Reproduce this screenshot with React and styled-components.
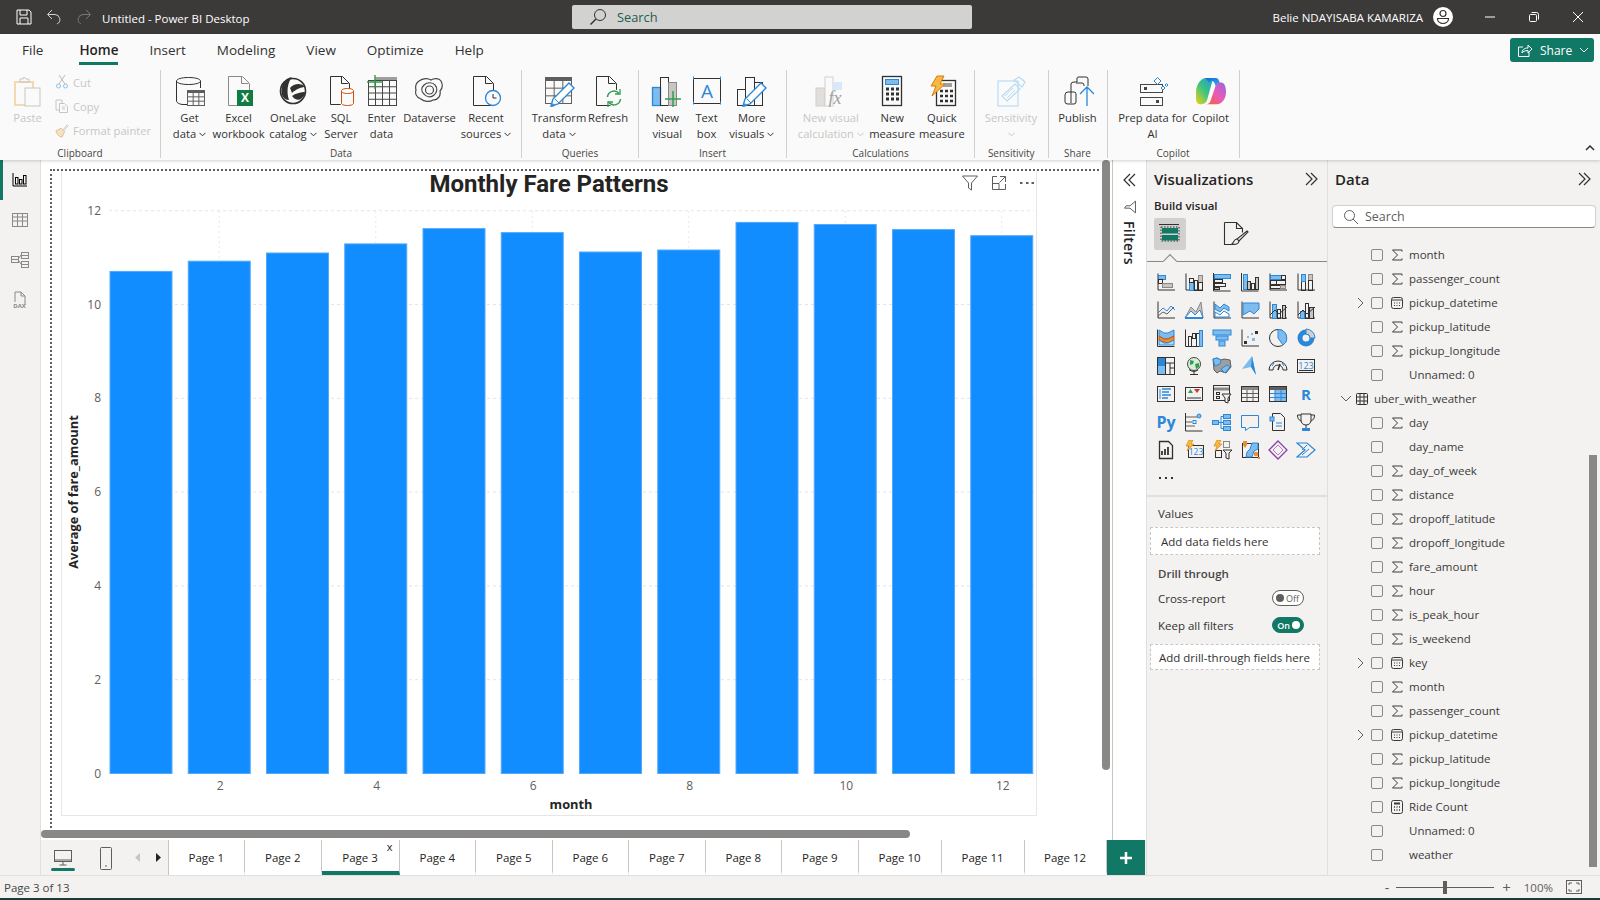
import React from 'react';
import styled, { createGlobalStyle } from 'styled-components';

const FONT = `'Open Sans', 'Noto Sans', 'Liberation Sans', sans-serif`;
const GREEN = '#117865';
const INK = '#323130';
const BLUE = '#2b88d8';
const SKY = '#7fbcee';
const ORANGE = '#e8912d';

const Global = createGlobalStyle`
  html, body { margin: 0; padding: 0; background: #fff; }
  body { font-family: ${FONT}; overflow: hidden; }
  * { box-sizing: border-box; }
`;

const Page = styled.div`width:1600px;height:900px;display:flex;flex-direction:column;overflow:hidden;color:${INK};`;

/* title bar */
const TitleBar = styled.header`height:34px;background:#3b3a39;display:flex;align-items:center;color:#fff;position:relative;`;
const TitleIcons = styled.div`display:flex;align-items:center;gap:14px;padding-left:16px;width:102px;`;
const TitleText = styled.div`font-size:11.5px;width:470px;padding-top:3px;`;
const SearchBox = styled.div`width:400px;height:24px;background:#d2d2d0;border-radius:2px;display:flex;align-items:center;padding-left:17px;gap:10px;color:#1f5c52;font-size:12.8px;`;
const UserArea = styled.div`margin-left:auto;display:flex;align-items:center;height:100%;`;
const UserName = styled.div`font-size:11.5px;margin-right:10px;white-space:nowrap;`;
const WindowButton = styled.div`display:flex;justify-content:center;align-items:center;width:44px;`;
const AvatarBox = styled.div`display:flex;margin-right:15px;`;

/* ribbon */
const Ribbon = styled.section`height:126px;background:#fafafa;position:relative;z-index:3;box-shadow:0 1px 3px rgba(0,0,0,.18);`;
const TabRow = styled.nav`height:36px;display:flex;align-items:flex-start;padding-left:22px;`;
const RibbonTab = styled.div`height:31px;padding-top:6px;line-height:20px;font-size:13.5px;margin-right:${p=>p.$mr}px;
  font-weight:${p=>p.$on?600:400};border-bottom:3px solid ${p=>p.$on?GREEN:'transparent'};color:${p=>p.$on?'#252423':INK};`;
const ShareButton = styled.div`margin-left:auto;margin-right:6px;margin-top:4px;width:84px;height:24px;background:${GREEN};border-radius:3px;color:#fff;font-size:12px;display:flex;align-items:center;gap:7px;padding-left:7px;`;
const GroupRow = styled.div`display:flex;height:90px;`;
const Group = styled.div`width:${p=>p.$w}px;height:88px;border-right:1px solid #d2d0ce;display:flex;flex-direction:column;`;
const GroupItems = styled.div`height:77px;flex:none;display:flex;`;
const GroupLabel = styled.div`font-size:10px;line-height:12px;text-align:center;color:#484644;white-space:nowrap;`;
const Item = styled.div`width:${p=>p.$w}px;display:flex;flex-direction:column;align-items:center;padding-top:5px;color:${p=>p.$dim?'#c8c6c4':INK};font-size:11.2px;`;
const ItemIcon = styled.div`width:32px;height:32px;margin-bottom:3px;display:flex;justify-content:center;align-items:center;`;
const ItemLine = styled.div`line-height:16px;min-height:16px;white-space:nowrap;display:flex;align-items:center;gap:3px;`;
const SmallCol = styled.div`display:flex;flex-direction:column;`;
const SmallRow = styled.div`height:24px;display:flex;align-items:center;gap:4px;font-size:11.2px;color:#c8c6c4;white-space:nowrap;`;
const SmallIconBox = styled.span`width:14px;height:16px;display:flex;align-items:center;justify-content:center;`;
const CollapseMark = styled.div`position:absolute;right:5px;bottom:4px;`;

/* body */
const Body = styled.main`height:715px;display:grid;grid-template-columns:41px 1105px 181px 273px;background:#f3f2f1;`;
const Rail = styled.aside`background:#f3f2f1;border-right:1px solid #e1dfdd;display:flex;flex-direction:column;align-items:center;padding-top:8px;gap:16px;position:relative;`;
const RailMark = styled.div`position:absolute;left:0;top:0;width:3px;height:40px;background:${GREEN};`;
const RailIcon = styled.div`width:24px;height:24px;display:flex;justify-content:center;align-items:center;`;
const Middle = styled.div`display:flex;flex-direction:column;`;
const MiddleTop = styled.div`height:680px;display:flex;`;
const Canvas = styled.div`width:1071px;background:#fff;position:relative;padding:9px 0 0 9px;`;
const ReportPage = styled.div`width:1049px;height:659px;border-top:2px dotted #605e5c;border-left:2px dotted #605e5c;padding-left:9px;`;
const VisualBox = styled.div`width:976px;height:645px;border:1px solid #e6e6e6;border-top:none;position:relative;`;
const VisualTools = styled.div`position:absolute;top:3px;right:1px;display:flex;align-items:center;gap:12px;`;
const ScrollV = styled.div`position:absolute;left:1061px;top:0;width:8px;height:610px;background:#8a8886;border-radius:4px;`;
const ScrollH = styled.div`position:absolute;left:0;top:670px;width:869px;height:8px;background:#8a8886;border-radius:4px;`;
const FilterPane = styled.div`width:34px;background:#fff;border-left:1px solid #c8c6c4;display:flex;flex-direction:column;align-items:center;padding-top:12px;`;
const FilterGap = styled.div`height:12px;`;
const FilterWord = styled.div`writing-mode:vertical-rl;font-size:14px;font-weight:600;color:#252423;margin-top:7px;letter-spacing:.3px;`;

const PageStrip = styled.div`height:35px;display:flex;`;
const StripTools = styled.div`width:127.6px;background:#f3f2f1;display:flex;align-items:center;position:relative;border-right:1px solid #c8c6c4;`;
const StripTool = styled.div`width:${p=>p.$w}px;display:flex;justify-content:center;align-items:center;`;
const DeskMark = styled.div`position:absolute;left:10px;bottom:4px;width:24px;height:3px;border-radius:2px;background:${GREEN};`;
const PageTab = styled.div`width:${p=>p.$w}px;background:#fff;border-right:1px solid #c8c6c4;font-size:11.5px;color:#252423;display:flex;justify-content:center;align-items:center;position:relative;
  border-bottom:4px solid ${p=>p.$on?GREEN:'#fff'};padding-top:4px;`;
const TabClose = styled.span`position:absolute;top:0;right:6px;font-size:11px;line-height:14px;`;
const AddPage = styled.div`width:38px;background:${GREEN};display:flex;justify-content:center;align-items:center;`;

/* visualizations */
const VizPane = styled.aside`background:#f3f2f1;border-left:1px solid #e1dfdd;position:relative;`;
const PaneHead = styled.div`display:flex;justify-content:space-between;align-items:center;height:24px;margin-top:7px;padding:0 8px 0 7px;font-size:15px;font-weight:600;color:#252423;`;
const BuildLabel = styled.div`font-size:11.5px;font-weight:600;padding-left:7px;line-height:16px;margin-top:7px;color:#252423;`;
const BuildTabs = styled.div`display:flex;align-items:center;height:32px;margin-top:4px;padding-left:7px;gap:37px;`;
const ActiveTile = styled.div`width:32px;height:32px;background:#d2d0ce;border-radius:2px;display:flex;justify-content:center;align-items:center;`;
const TabLine = styled.div`height:1px;background:#8a8886;margin-top:11px;position:relative;
  &::after{content:'';position:absolute;left:18px;top:-5px;width:9px;height:9px;background:#f3f2f1;border-left:1px solid #8a8886;border-top:1px solid #8a8886;transform:rotate(45deg);}`;
const Gallery = styled.div`display:grid;grid-template-columns:repeat(6,28px);grid-auto-rows:28px;padding:6px 0 0 5px;`;
const Cell = styled.div`display:flex;justify-content:center;align-items:center;`;
const Dots = styled.div`display:flex;gap:4px;`;
const Dot = styled.span`width:2px;height:2px;background:#323130;`;
const WellLine = styled.div`height:2px;background:#e1dfdd;margin-top:3px;`;
const WellHead = styled.div`font-size:11.5px;line-height:16px;padding-left:11px;margin-top:${p=>p.$mt}px;font-weight:${p=>p.$b?600:400};color:${p=>p.$b?'#484644':INK};`;
const DropBox = styled.div`margin:${p=>p.$mt}px 0 0 3px;width:170px;height:${p=>p.$h}px;background:#fff;border:1px dashed #c8c6c4;font-size:11.5px;display:flex;align-items:center;padding-left:${p=>p.$pl}px;white-space:nowrap;`;
const ToggleRow = styled.div`height:16px;margin-top:${p=>p.$mt}px;padding:0 23px 0 11px;display:flex;justify-content:space-between;align-items:center;font-size:11.5px;`;
const Toggle = styled.div`width:32px;height:16px;border-radius:8px;display:flex;align-items:center;gap:2px;font-size:9px;padding:0 3px;
  justify-content:${p=>p.$on?'flex-end':'flex-start'};background:${p=>p.$on?GREEN:'#fff'};border:1px solid ${p=>p.$on?GREEN:'#605e5c'};color:${p=>p.$on?'#fff':'#605e5c'};font-weight:${p=>p.$on?600:400};`;
const Knob = styled.span`width:8px;height:8px;border-radius:50%;background:${p=>p.$on?'#fff':'#605e5c'};`;

/* data */
const DataPane = styled.aside`background:#f3f2f1;border-left:1px solid #e1dfdd;position:relative;overflow:hidden;`;
const DataSearch = styled.div`margin:14px 0 0 4px;height:23px;width:264px;background:#fff;border:1px solid #d2d0ce;border-bottom-color:#8a8886;border-radius:4px;display:flex;align-items:center;gap:6px;padding-left:10px;font-size:12.5px;color:#605e5c;`;
const FieldList = styled.div`margin-top:14.7px;`;
const FieldRow = styled.div`height:24px;display:flex;align-items:center;font-size:11.5px;color:#3b3a39;padding-left:${p=>p.$table?12:27}px;white-space:nowrap;`;
const Expand = styled.div`width:16px;display:flex;justify-content:flex-start;padding-left:${p=>p.$pl||0}px;`;
const Check = styled.div`width:12px;height:12px;border:1px solid #8a8886;border-radius:2px;margin-right:8px;`;
const FieldIcon = styled.div`width:12px;height:12px;margin-right:6px;display:flex;justify-content:center;align-items:center;`;
const DataScroll = styled.div`position:absolute;left:261px;top:295px;width:8px;height:412px;background:#8a8886;`;

/* status */
const StatusBar = styled.footer`height:23px;background:#f3f2f1;border-top:1px solid #e1dfdd;display:flex;align-items:center;padding:0 18px 0 4px;font-size:11.5px;color:#484644;`;
const ZoomArea = styled.div`margin-left:auto;display:flex;align-items:center;gap:6px;`;
const ZoomTrack = styled.div`width:98px;height:1px;background:#605e5c;position:relative;margin:0 2px 0 1px;`;
const ZoomThumb = styled.div`position:absolute;left:47px;top:-6px;width:4px;height:13px;background:#605e5c;`;
const ZoomText = styled.span`color:#605e5c;font-size:${p=>p.$s||11.5}px;margin-left:${p=>p.$ml||0}px;`;
const FitBox = styled.div`display:flex;margin-left:7px;`;
const StripeBottom = styled.div`height:2px;background:#1c3b3c;`;

const ChartSvg = styled.svg`display:block;font-family:${FONT};`;
const AxisNum = styled.text`font-size:12px;fill:#605e5c;`;
const AxisTitle = styled.text`font-size:12.8px;font-weight:700;fill:#252423;`;
const ChartTitle = styled.text`font-family:Roboto,'Liberation Sans',sans-serif;font-size:24px;font-weight:700;fill:#252423;`;

const Ico = ({ s = 20, vb, children, c = INK, w = 1, style }) => (
  <svg width={s} height={s} viewBox={vb || `0 0 ${s} ${s}`} fill="none" stroke={c} strokeWidth={w} style={style}>{children}</svg>
);
const Chev = ({ c = INK }) => <svg width="7" height="5" viewBox="0 0 7 5" fill="none" stroke={c} strokeWidth="1"><path d="M.5 .8 3.5 3.8 6.5 .8" /></svg>;
const DoubleChev = ({ left }) => (
  <Ico s={16} w={1.2} style={left ? { transform: 'scaleX(-1)' } : null}><path d="M3 2l6 6-6 6M8 2l6 6-6 6" /></Ico>
);
const Funnel = ({ s = 18, rot, c = '#605e5c' }) => (
  <svg width={s} height={s} viewBox="0 0 18 18" fill="none" stroke={c} style={rot ? { transform: 'rotate(90deg)' } : null}><path d="M1.5 2h15l-6 7v7l-3-2V9z" /></svg>
);
const SearchGlass = () => (
  <Ico s={18}><circle cx="11" cy="7" r="5.5" /><path d="M7 11l-5.5 5.500" strokeWidth="1.4" /></Ico>
);

/* ribbon icons (32 grid) */
const Gridlets = ({ x, y, w, h, cols, rows, c = INK }) => {
  const ps = [];
  for (let i = 1; i < cols; i++) ps.push(`M${x + (w * i) / cols} ${y}v${h}`);
  for (let i = 1; i < rows; i++) ps.push(`M${x} ${y + (h * i) / rows}h${w}`);
  return <g stroke={c}><rect x={x} y={y} width={w} height={h} /><path d={ps.join('')} /></g>;
};
const Doc = ({ x = 5, c = INK, w = 20, h = 28, y = 2 }) => (
  <path d={`M${x + .5} ${y + .5}h${w - 7}l7 7v${h - 7}h-${w}zM${x + w - 7.5} ${y + .5}v7h7`} stroke={c} />
);
const Pencil = ({ x = 0, y = 0 }) => (
  <g transform={`translate(${x} ${y})`}><path d="M1 29l2-7L19 6l5 5L8 27z" fill="#fff" stroke={BLUE} strokeWidth="1.4" /><path d="M5 22l4 4" stroke={BLUE} /><path d="M1 30l2-4 2 3z" fill={BLUE} stroke="none" /></g>
);

const R = {
  paste: <Ico s={32}><rect x="3" y="7" width="18" height="23" stroke="#f3d9ae" strokeWidth="2" /><path d="M8 7V4h3l1-2 2 2h3v3z" stroke="#c8c6c4" /><rect x="13" y="13" width="15" height="18" fill="#fafafa" stroke="#c8c6c4" /></Ico>,
  get: <Ico s={32}><path d="M2.5 6v20c0 2 4 3.5 6.5 3.5h4M26.5 6v7M2.5 6c0-2 5-3.500 12-3.500s12 1.500 12 3.500-5 3.500-12 3.500-12-1.500-12-3.500z" /><rect x="13" y="15" width="18" height="3" fill="#605e5c" stroke="none" /><Gridlets x={13.5} y={17.5} w={17} h={13} cols={3} rows={3} c="#605e5c" /></Ico>,
  excel: <Ico s={32}><Doc x={5} c="#8a8886" w={21} h={29} y={1} /><rect x="14" y="15" width="16" height="16" fill="#107c41" stroke="none" /><text x="22" y="27" textAnchor="middle" fontSize="12" fontWeight="700" fill="#fff" stroke="none" fontFamily="Open Sans">X</text></Ico>,
  onelake: <Ico s={32}><circle cx="16" cy="16" r="12.5" strokeWidth="1.6" /><path d="M5 20C3 12 7 3 15 2 11 7 9 16 12 25 9 25 6 23 5 20z" fill="#323130" stroke="none" /><path d="M13 13c4-5 12-5 15-1-3 0-9 2-13 6zM15 21c2 3 6 5 9 3 2-2 4-4 4-7-3 0-9 1-13 4z" fill="#323130" stroke="none" /></Ico>,
  sql: <Ico s={32}><Doc x={5} w={19} h={28} y={1} /><rect x="15" y="14" width="15" height="17" rx="4" fill="#fafafa" stroke="none" /><path d="M16.5 16v12c0 1.500 2 2.500 6 2.500s6-1 6-2.500V16c0-1.500-2-2.500-6-2.500s-6 1-6 2.500zm0 0c0 1.500 2 2.500 6 2.500s6-1 6-2.500" stroke="#ca5010" /></Ico>,
  enter: <Ico s={32}><rect x="9" y="2" width="22" height="4" fill="#a19f9d" stroke="none" /><Gridlets x={2.5} y={5.5} w={28} h={25} cols={4} rows={4} c="#484644" /><path d="M9 0v14M1 7h16" stroke="#2e9e4f" strokeWidth="1.4" /></Ico>,
  dataverse: <Ico s={32} w={1.2} c="#484644"><path d="M5 6c4-3 9-3 12-1 3-2 8-2 10 1 2 4 1 8-1 10 1 5-2 9-7 9-3 2-9 2-12-1-5-2-6-6-5-9-1-4 0-7 3-9z" /><path d="M10 10c3-3 9-3 11 0 3 3 2 8-1 10-3 3-8 2-10-1-3-3-3-6 0-9z" /><circle cx="15.5" cy="15" r="4" /></Ico>,
  recent: <Ico s={32}><Doc x={3} w={20} h={29} y={1} /><circle cx="23" cy="23" r="7.5" fill="#fafafa" stroke={BLUE} strokeWidth="1.3" /><path d="M23 19v4h3.500" stroke="#323130" /></Ico>,
  transform: <Ico s={32}><rect x="2" y="2" width="27" height="4" fill="#605e5c" stroke="none" /><Gridlets x={2.5} y={5.5} w={26} h={23} cols={3} rows={3} c="#605e5c" /><Pencil x={7} y={2} /></Ico>,
  refresh: <Ico s={32}><Doc x={4} w={20} h={29} y={1} /><circle cx="22" cy="23" r="8.5" fill="#fafafa" stroke="none" /><path d="M15.5 22a6.500 6.500 0 0 1 11.500-3.500M28.500 24a6.500 6.500 0 0 1-11.500 3.500" stroke="#2f9e52" strokeWidth="1.5" /><path d="M28 14v5h-5M16 32v-5h5" stroke="#2f9e52" strokeWidth="1.3" /></Ico>,
  newvis: <Ico s={32}><rect x="1.5" y="12.5" width="8" height="18" fill={SKY} stroke={BLUE} strokeWidth="1.3" /><rect x="9.5" y="2.5" width="8" height="28" stroke={INK} /><rect x="17.5" y="7.5" width="8" height="23" fill="#c8c6c4" stroke="#8a8886" /><path d="M22 16v16M14 24h16" stroke="#2e9e4f" strokeWidth="1.5" /></Ico>,
  textbox: <Ico s={32}><rect x="2.5" y="3.5" width="27" height="25" stroke="#323130" /><path d="M2 3h1M29 3h1M2 28h1M29 28h1" stroke={BLUE} strokeWidth="3" /><text x="16" y="23" textAnchor="middle" fontSize="19" fill={BLUE} stroke="none" fontFamily="Open Sans">A</text></Ico>,
  more: <Ico s={32}><rect x="1.5" y="14.5" width="8" height="16" /><rect x="9.5" y="2.5" width="9" height="28" /><rect x="18.5" y="7.5" width="8" height="23" /><Pencil x={6} y={2} /></Ico>,
  nvc: <Ico s={32}><rect x="1" y="13" width="9" height="18" fill="#e1dfdd" stroke="#d2d0ce" /><rect x="10" y="2" width="8" height="29" fill="#fafafa" stroke="#d2d0ce" /><rect x="18" y="7" width="9" height="8" fill="#d7e8f8" stroke="none" /><text x="20" y="29" textAnchor="middle" fontSize="18" fontStyle="italic" fill="#a19f9d" stroke="none" fontFamily="Liberation Serif">fx</text></Ico>,
  measure: <Ico s={32}><rect x="6.5" y="1.5" width="19" height="29" strokeWidth="1.3" /><rect x="9.5" y="4.5" width="13" height="5" fill={SKY} stroke={BLUE} /><path d="M10 14h3M15 14h3M20 14h3M10 19h3M15 19h3M20 19h3M10 24h3M15 24h3M20 24h3" stroke={INK} strokeWidth="3" /></Ico>,
  quick: <Ico s={32}><rect x="10.5" y="5.5" width="19" height="25" strokeWidth="1.3" /><rect x="17" y="8" width="9" height="4" fill="#a19f9d" stroke="none" /><path d="M14 16h3M19 16h3M24 16h3M14 21h3M19 21h3M24 21h3M14 26h3M19 26h3M24 26h3" strokeWidth="2.5" /><path d="M11 1h7l-4 8h5L6 21l4-10H5z" fill="#f7b93e" stroke="#d97b12" /></Ico>,
  sens: <Ico s={32} c="#b7dbf5"><rect x="3" y="6" width="20" height="25" strokeWidth="1.2" /><path d="M7 21L20 9l5 5-13 12z" strokeWidth="1.2" /><path d="M10 21l8-8M12 23l8-8" /><path d="M19 5l5-3 6 5-3 5z" strokeWidth="1.2" /></Ico>,
  publish: <Ico s={32}><path d="M3 27V20q0-3 3-3h3V9q0-2 3-2h3V3q0-1 2-1h7q2 0 2 2v23" /><path d="M3 27q0 2 3 2h6q2 0 2-2V19q0-2-2-2H9M9 17V28M14 8h6q2 0 2 2v4" /><rect x="18" y="11" width="14" height="20" fill="#fafafa" stroke="none" /><path d="M25 31V12M18 19l7-7 7 7" stroke={BLUE} strokeWidth="1.3" /></Ico>,
  prep: <Ico s={32}><rect x="3.5" y="9.5" width="22" height="8" stroke="#484644" /><rect x="3.5" y="22.5" width="22" height="8" stroke="#484644" /><rect x="7" y="12" width="3" height="3" fill="#484644" stroke="none" /><rect x="19" y="25" width="3" height="3" fill="#484644" stroke="none" /><path d="M17 6l3.500-3.500L24 6l-3.500 3.500zM24 13l2-2 2 2-2 2zM28 10l1.500-1.500L31 10l-1.500 1.500z" stroke={BLUE} fill="#fafafa" /></Ico>,
  copilot: (
    <svg width="30" height="30" viewBox="0 0 32 32">
      <defs>
        <linearGradient id="cpA" x1="0" y1="1" x2="1" y2="0"><stop offset="0" stopColor="#f5d20f" /><stop offset=".45" stopColor="#3fc47f" /><stop offset="1" stopColor="#1b8fe8" /></linearGradient>
        <linearGradient id="cpB" x1="0" y1="1" x2="1" y2="0"><stop offset="0" stopColor="#f6612c" /><stop offset=".5" stopColor="#e85bb5" /><stop offset="1" stopColor="#9a63e8" /></linearGradient>
        <linearGradient id="cpC" x1="0" y1="0" x2="1" y2="1"><stop offset="0" stopColor="#1466d8" /><stop offset="1" stopColor="#2fb4f4" /></linearGradient>
      </defs>
      <path d="M10 2h12c-3 0-4 2-5 5l-5 18c-1 3-3 5-6 5H4C1 30 0 27 0 24V18C0 10 4 3 10 2z" fill="url(#cpA)" />
      <path d="M10 2h11c2 0 3 1 4 4l2 5H21l-1-3c-1-2-2-3-3-3-1.500 0-2 .5-3 2z" fill="url(#cpC)" />
      <path d="M22 30H11c3 0 4-2 5-5l5-15c1-2 2-3 5-3h1c3 0 5 4 5 10 0 7-4 13-10 13z" fill="url(#cpB)" />
    </svg>
  ),
  cut: <Ico s={14} c="#8fc0e8"><path d="M4 0l6 9M10 0L4 9" stroke="#bdbbb9" /><circle cx="3.5" cy="11" r="2" /><circle cx="10.5" cy="11" r="2" /></Ico>,
  copy: <Ico s={14} c="#c8c6c4"><path d="M1 1h6v3M1 1v10h3" /><path d="M4.5 4.5h5l3 3v6h-8zM7 8h3M7 10h3" /></Ico>,
  painter: <Ico s={16} c="#d8b98a"><path d="M1 9l6-3 4 4-3 6c-3 0-6-3-7-7z" fill="#f6e2c2" /><path d="M9 8l5-6 1 1-5 6" stroke="#c8c6c4" /></Ico>,
};

/* gallery icons (20 grid) */
const Ax = () => <path d="M2 1.500v16.500h17" />;
const Bx = ({ x, y, w, h, f = 'none', c = INK }) => <rect x={x + .5} y={y + .5} width={w} height={h} fill={f} stroke={c} />;
const G = [
  <><Ax /><Bx x={2} y={3} w={7} h={4} f={SKY} c={BLUE} /><Bx x={2} y={7} w={4} h={4} /><Bx x={6} y={11} w={10} h={4} f="#c8c6c4" c="#8a8886" /></>,
  <><Ax /><Bx x={5} y={10} w={4} h={8} f={SKY} c={BLUE} /><Bx x={5} y={6} w={4} h={4} /><Bx x={10} y={8} w={3} h={10} /><Bx x={14} y={3} w={4} h={7} f="#c8c6c4" c="#8a8886" /><Bx x={14} y={10} w={4} h={8} /></>,
  <><path d="M1.500 1v18h17" /><Bx x={2} y={2} w={16} h={4} f={SKY} c={BLUE} /><Bx x={2} y={7} w={8} h={3} /><Bx x={2} y={11} w={11} h={3} /><Bx x={2} y={15} w={5} h={2} f="#c8c6c4" /></>,
  <><path d="M1.500 1v18h17" /><Bx x={3} y={2} w={4} h={15} f={SKY} c={BLUE} /><Bx x={7} y={9} w={3} h={8} f="#c8c6c4" /><Bx x={11} y={11} w={3} h={6} /><Bx x={15} y={5} w={3} h={12} f="#c8c6c4" /></>,
  <><Ax /><Bx x={2} y={3} w={11} h={4} f={SKY} c={BLUE} /><Bx x={13} y={3} w={4} h={4} /><Bx x={2} y={8} w={6} h={4} /><Bx x={8} y={8} w={9} h={4} /><Bx x={2} y={13} w={10} h={3} /><Bx x={12} y={13} w={5} h={3} f="#c8c6c4" c="#8a8886" /></>,
  <><Ax /><Bx x={5} y={9} w={4} h={9} /><Bx x={5} y={2} w={4} h={7} f={SKY} c={BLUE} /><Bx x={12} y={2} w={4} h={6} f="#c8c6c4" c="#8a8886" /><Bx x={12} y={8} w={4} h={10} /></>,
  <><Ax /><path d="M2 13l5-5 4 3 4-5 4 4" stroke={BLUE} /><path d="M2 16l5-4 4 2 7-7" stroke="#605e5c" /></>,
  <><path d="M1 18L7 7l5 5 5-10 2 16z" fill="#c8c6c4" stroke="#8a8886" /><path d="M1 18l6-7 4 4 5-5 3 8z" fill="#fff" stroke={BLUE} /><path d="M1 18h18" stroke={BLUE} strokeWidth="2" /></>,
  <><Ax /><path d="M3 4l5 4 4-4 5 3v4l-5-3-4 4-5-3z" fill={SKY} stroke={BLUE} /><path d="M3 12l5 3 4-4 5 3v3H3z" fill="#fff" stroke={BLUE} /></>,
  <><Ax /><path d="M3 3h16v6l-5 5-4-3-7 4z" fill={SKY} stroke={BLUE} /></>,
  <><Ax /><Bx x={4} y={4} w={4} h={14} f={SKY} c={BLUE} /><Bx x={9} y={9} w={3} h={9} /><Bx x={14} y={5} w={3} h={13} f="#c8c6c4" /><path d="M2 15l5-5 4 4 8-7" /></>,
  <><Ax /><Bx x={4} y={11} w={4} h={7} f={SKY} c={BLUE} /><Bx x={9} y={3} w={3} h={15} /><Bx x={13} y={7} w={4} h={11} f="#c8c6c4" /><path d="M2 15l5-5 4 4 8-7" /></>,
  <><path d="M1.500 1.500v17h17" /><path d="M3 2l5 3 4 0 6-3v6l-6 3-4 0-5-3z" fill={SKY} stroke={BLUE} /><path d="M3 8l5 3h4l6-3v4l-6 3-4-1-5-2z" fill={ORANGE} stroke="#ca5010" /><path d="M3 12l5 3h4l6-3v5H3z" fill="#bcd8f0" stroke={BLUE} /></>,
  <><path d="M1.500 1.500v17h17" /><Bx x={4} y={8} w={3} h={10} /><Bx x={8} y={5} w={3} h={5} /><Bx x={12} y={5} w={3} h={13} /><Bx x={15} y={2} w={3} h={16} f={SKY} c={BLUE} /></>,
  <><rect x="1" y="2" width="18" height="5" fill={SKY} stroke={BLUE} /><rect x="4" y="8" width="12" height="4" fill={SKY} stroke={BLUE} /><rect x="7" y="13" width="6" height="5" fill={SKY} stroke={BLUE} /></>,
  <><Ax /><g stroke="none"><rect x="4" y="13" width="3" height="3" fill={INK} /><rect x="7" y="8" width="2" height="2" fill={SKY} /><rect x="12" y="10" width="3" height="3" fill={SKY} /><rect x="15" y="3" width="3" height="3" fill={INK} /><rect x="11" y="5" width="2" height="2" fill={SKY} /></g></>,
  <><circle cx="10" cy="10" r="8.5" /><path d="M10 1.500A8.500 8.500 0 0 1 15 17L10 10z" fill={SKY} stroke={BLUE} /></>,
  <><circle cx="10" cy="10" r="6" stroke={BLUE} strokeWidth="5" /><path d="M10 1A9 9 0 0 1 19 10h-5a4 4 0 0 0-4-4z" fill="#d2d0ce" stroke={BLUE} /></>,
  <><rect x="1.5" y="1.5" width="17" height="17" /><rect x="2" y="2" width="7" height="8" fill={BLUE} stroke="none" /><rect x="2" y="10" width="7" height="8" fill={SKY} stroke="none" /><path d="M9.500 2v16M9.500 7h9M14 7v11M14 12h4.500" /></>,
  <><circle cx="10" cy="8" r="6.5" fill="#d8ecd8" stroke="#484644" /><path d="M6 4l4 1-1 3-3 1zM11 8l4-1v4l-3 2z" fill="#2e9e4f" stroke="none" /><path d="M14 14a7 7 0 0 1-9-.5M10 15v3M6 18.500h8" /></>,
  <><path d="M1 3l4-1 4 2 3-1 6 1 1 7-5 6-6-2-3 2-3-3z" fill="#a19f9d" stroke="#605e5c" /><path d="M1 3l4-1 4 2-1 4-5 2zM9 13l6-4 3 2-5 6z" fill={SKY} stroke={BLUE} /></>,
  <><path d="M12 0L2 13l9-2 5 8z" fill={SKY} stroke="none" /><path d="M12 0l-1 11 5 8z" fill={BLUE} stroke="none" /></>,
  <><path d="M1 14a9 9 0 0 1 18 0h-4a5 5 0 0 0-10 0z" /><path d="M6 7l-2 3M14 7l2 3" stroke={BLUE} /><path d="M10 14l2-6" strokeWidth="1.5" /></>,
  <><rect x="1.5" y="3.5" width="17" height="13" /><path d="M3 14.500h14" /><text x="10" y="13" textAnchor="middle" fontSize="9" fill={BLUE} stroke="none" fontFamily="Open Sans">123</text></>,
  <><rect x="1.5" y="2.5" width="17" height="15" /><path d="M4 5v10" stroke={BLUE} /><path d="M6 5h9M6 8h7M6 11h9M6 14h6" stroke={BLUE} strokeWidth="1.5" /></>,
  <><rect x="1.5" y="3.5" width="17" height="13" /><path d="M4 9l2.500-4L9 9z" fill="#2e9e4f" stroke="none" /><path d="M10 5h6l-3 4z" fill="#d13438" stroke="none" /><path d="M3 14h14" /></>,
  <><rect x="1.5" y="1.5" width="16" height="15" /><path d="M2 5h15" strokeWidth="3" stroke="#8a8886" /><rect x="4.5" y="8.5" width="3" height="2" /><rect x="4.5" y="12.5" width="3" height="2" /><path d="M10 10h9l-3 4v5l-3-1v-4z" fill="#f3f2f1" /></>,
  <><rect x="1.5" y="2.5" width="17" height="15" /><path d="M2 4.500h16" strokeWidth="3" stroke="#8a8886" /><path d="M2 9.500h16M2 13.500h16M7 6v11M13 6v11" stroke="#605e5c" /></>,
  <><rect x="1.5" y="2.5" width="17" height="15" /><path d="M2 4.500h16" strokeWidth="3" stroke="#605e5c" /><rect x="7" y="6" width="11" height="11" fill={SKY} stroke="none" /><path d="M2 9.500h16M2 13.500h16M7 6v11M13 6v11" stroke={BLUE} /></>,
  <text x="10" y="16" textAnchor="middle" fontSize="15" fontWeight="700" fill={BLUE} stroke="none" fontFamily="Open Sans">R</text>,
  <text x="10" y="16" textAnchor="middle" fontSize="16" fontWeight="700" fill={BLUE} stroke="none" fontFamily="Open Sans">Py</text>,
  <><path d="M1.500 1v18h17" /><path d="M2 5h11M2 10h6M2 14h9" stroke="#605e5c" /><circle cx="15" cy="4" r="2" fill={SKY} stroke={BLUE} /><rect x="9" y="8.5" width="3" height="3" stroke={BLUE} /></>,
  <><rect x="0.5" y="8.5" width="6" height="4" fill={SKY} stroke={BLUE} /><rect x="11.5" y="2.5" width="7" height="4" fill={SKY} stroke={BLUE} /><rect x="11.5" y="8.5" width="7" height="4" fill={SKY} stroke={BLUE} /><rect x="11.5" y="14.5" width="7" height="4" fill={SKY} stroke={BLUE} /><path d="M7 10.500h4M9 4.500v12M9 4.500h2M9 16.500h2" stroke={BLUE} /></>,
  <path d="M1.500 3.500h17v12h-9l-4 3v-3h-4z" stroke={BLUE} />,
  <><path d="M4.500 1.500h8l4 4v13h-12z" /><rect x="2" y="5" width="4" height="4" fill={SKY} stroke={BLUE} /><path d="M8 11h6M8 14h6" stroke={BLUE} /></>,
  <><path d="M5 2h10v6c0 3-2 5-5 5s-5-2-5-5z" /><path d="M5 3H1.500c0 3 1 5 3.500 6M15 3h3.500c0 3-1 5-3.500 6" /><path d="M10 13v3M6 16.500h8" /><rect x="6" y="16" width="8" height="3" fill={BLUE} stroke="none" /></>,
  <><path d="M3.500 1.500h9l4 4v13h-13z" strokeWidth="1.3" /><path d="M6 11v4M9 9v6M12 7v8" strokeWidth="2" stroke="#484644" /></>,
  <><rect x="4.5" y="5.5" width="15" height="12" /><text x="12" y="15" textAnchor="middle" fontSize="8.5" fill={BLUE} stroke="none" fontFamily="Open Sans">123</text><path d="M5 0h4l-2 4h3L3 11l2-5H2z" fill="#f7b93e" stroke="#d97b12" strokeWidth=".6" /></>,
  <><rect x="11.5" y="1.5" width="6" height="6" stroke="#8a8886" /><rect x="3.5" y="10.5" width="6" height="7" /><path d="M11 10h9l-3 3v6l-3-1v-5z" fill="#f3f2f1" /><path d="M5 0h4l-2 4h3L3 11l2-5H2z" fill="#f7b93e" stroke="#d97b12" strokeWidth=".6" /></>,
  <><rect x="2.5" y="3.5" width="16" height="14" /><path d="M7 12l3-3 2-6h6v6l-4 2-2 6H6z" fill={SKY} stroke={BLUE} /><path d="M3 1h4v4l-2 3-2-3z" fill={ORANGE} stroke="none" /><circle cx="16" cy="14" r="2.3" fill={ORANGE} stroke="none" /><rect x="18" y="17" width="2" height="2" fill={ORANGE} stroke="none" /></>,
  <><path d="M10 1l9 9-9 9-9-9z" stroke="#8e3fa8" strokeWidth="1.3" /><path d="M10 5l5 5-5 5-5-5z" stroke="#b77cc9" /></>,
  <><path d="M1 3h10l8 7-8 7H1l8-7z" stroke={BLUE} strokeWidth="1.2" /><path d="M6 10l5-5M6 15l7-6" stroke={BLUE} /></>,
];

const FormatIcon = (
  <Ico s={26} w={1.1}>
    <path d="M1.500 1.500h12l6 6v4M13.500 1.500v6h6M1.500 1.500v22h9" /><path d="M24 10l1 1-9 9-2-2z" /><path d="M14 18c-3 0-3 3-5 5 3 1 7 0 7-3" />
  </Ico>
);
const ValuesIcon = (
  <Ico s={24}>
    <path d="M1 2.500h20" /><path d="M3 5h18v14H3z" strokeDasharray="1.5 1.5" />
    <rect x="4" y="6" width="16" height="5.5" fill={GREEN} stroke="none" /><rect x="4" y="13" width="16" height="5.5" fill={GREEN} stroke="none" />
  </Ico>
);

const Sigma = <svg width="12" height="12" viewBox="0 0 12 12" fill="none" stroke="#3b3a39"><path d="M11 2.500V1H1.500L6.500 6l-5 5H11V9.500" /></svg>;
const Cal = <svg width="12" height="12" viewBox="0 0 12 12" fill="none" stroke="#3b3a39"><rect x=".5" y=".5" width="11" height="11" rx="2" /><path d="M1 3h10" /><path d="M3 6h1M5.500 6h1M8 6h1M3 8.500h1M5.500 8.500h1M8 8.500h1" strokeWidth="1.2" /></svg>;
const Calc = <svg width="12" height="14" viewBox="0 0 12 14" fill="none" stroke="#3b3a39"><rect x=".5" y=".5" width="11" height="13" rx="2" /><path d="M3 3.500h6" strokeWidth="2" /><path d="M3 7h1M5.500 7h1M8 7h1M3 10h1M5.500 10h1M8 10h1" strokeWidth="1.5" /></svg>;
const TableI = <svg width="12" height="12" viewBox="0 0 12 12" fill="none" stroke="#323130"><rect x=".5" y=".5" width="11" height="11" rx="1" /><path d="M4 1v10M8 1v10M1 4h10M1 8h10" /></svg>;
const ArrowR = <svg width="8" height="12" viewBox="0 0 8 12" fill="none" stroke="#605e5c"><path d="M1 1l5 5-5 5" /></svg>;
const ArrowD = <svg width="12" height="8" viewBox="0 0 12 8" fill="none" stroke="#605e5c"><path d="M1 1l5 5 5-5" /></svg>;

const FIELDS = [
  ['sum','month'],['sum','passenger_count'],['cal','pickup_datetime',1],['sum','pickup_latitude'],['sum','pickup_longitude'],[null,'Unnamed: 0'],
  ['table','uber_with_weather'],
  ['sum','day'],[null,'day_name'],['sum','day_of_week'],['sum','distance'],['sum','dropoff_latitude'],['sum','dropoff_longitude'],['sum','fare_amount'],['sum','hour'],['sum','is_peak_hour'],['sum','is_weekend'],
  ['cal','key',1],['sum','month'],['sum','passenger_count'],['cal','pickup_datetime',1],['sum','pickup_latitude'],['sum','pickup_longitude'],['calc','Ride Count'],[null,'Unnamed: 0'],[null,'weather'],
];
const ICONMAP = { sum: Sigma, cal: Cal, calc: Calc };

const Field = ({ icon, label, expand }) =>
  icon === 'table' ? (
    <FieldRow $table>
      <Expand>{ArrowD}</Expand>
      <FieldIcon>{TableI}</FieldIcon>
      {label}
    </FieldRow>
  ) : (
    <FieldRow>
      <Expand $pl={2}>{expand ? ArrowR : null}</Expand>
      <Check />
      <FieldIcon>{ICONMAP[icon] || null}</FieldIcon>
      {label}
    </FieldRow>
  );

const TOPS = [271.4, 261.2, 253, 243.9, 228.6, 232.6, 252, 250, 222.4, 224.5, 229.6, 235.7];
const BOTTOM = 773.5;
const YS = [12, 10, 8, 6, 4, 2, 0];
const yOf = v => BOTTOM - v * 46.9;
const xOf = i => 109.5 + i * 78.25;

const Chart = () => (
  <ChartSvg width="975" height="645" viewBox="62 171 975 645">
    <ChartTitle x="549" y="192" textAnchor="middle">Monthly Fare Patterns</ChartTitle>
    {YS.filter(v => v).map(v => <line key={v} x1="109" x2="1034" y1={yOf(v)} y2={yOf(v)} stroke="#e4e4e4" strokeDasharray="3 3" />)}
    {[1, 3, 5, 7, 9, 11].map(i => <line key={i} x1={xOf(i) + 31.5} x2={xOf(i) + 31.5} y1="211" y2={BOTTOM} stroke="#e8e8e8" strokeDasharray="2 3" />)}
    {TOPS.map((t, i) => <rect key={i} x={xOf(i) + .5} y={t} width="62" height={BOTTOM - t} fill="#118dff" stroke="#55a9f8" />)}
    {YS.map(v => <AxisNum key={v} x="101" y={yOf(v) + 4} textAnchor="end">{v}</AxisNum>)}
    {[1, 3, 5, 7, 9, 11].map(i => <AxisNum key={i} x={xOf(i) + 32.5} y="790" textAnchor="middle">{i + 1}</AxisNum>)}
    <AxisTitle x="571" y="809" textAnchor="middle">month</AxisTitle>
    <AxisTitle transform="translate(78 492) rotate(-90)" textAnchor="middle">Average of fare_amount</AxisTitle>
  </ChartSvg>
);

const RibbonItem = ({ w, icon, lines = [], chev, dim }) => (
  <Item $w={w} $dim={dim}>
    <ItemIcon>{icon}</ItemIcon>
    {lines.map((l, i) => (
      <ItemLine key={i}>{l}{chev && i === lines.length - 1 ? <Chev c={dim ? '#c8c6c4' : INK} /> : null}</ItemLine>
    ))}
  </Item>
);

const PAGES = [76.5,76.5,78,76.5,76.5,76.5,76.5,76.5,76.5,83,83,82];

export default function App() {
  return (
    <Page>
      <Global />
      <TitleBar>
        <TitleIcons>
          <Ico s={16} c="#fff"><path d="M1 1h12l2 2v12H1zM4 1v5h7V1M4 15v-6h8v6" /></Ico>
          <Ico s={16} c="#d2d0ce"><path d="M6 1L1.500 5.500 6 10M2 5.500h7a5 5 0 0 1 2 9.500" /></Ico>
          <Ico s={16} c="#797775"><path d="M10 1l4.500 4.500L10 10M14 5.500H7a5 5 0 0 0-2 9.500" /></Ico>
        </TitleIcons>
        <TitleText>Untitled - Power BI Desktop</TitleText>
        <SearchBox><SearchGlass />Search</SearchBox>
        <UserArea>
          <UserName>Belie NDAYISABA KAMARIZA</UserName>
          <AvatarBox><svg width="20" height="20" viewBox="0 0 20 20"><circle cx="10" cy="10" r="10" fill="#fff" /><circle cx="10" cy="6.5" r="3" fill="none" stroke="#323130" strokeWidth="1.2" /><path d="M4.500 11.500h11c0 3-2.500 5-5.500 5s-5.500-2-5.500-5z" fill="none" stroke="#323130" strokeWidth="1.2" /></svg></AvatarBox>
          <WindowButton><Ico s={12} c="#fff"><path d="M1 6h10" /></Ico></WindowButton>
          <WindowButton><Ico s={12} c="#fff"><rect x="1.5" y="3.5" width="7" height="7" rx="1" /><path d="M3.500 1.500h5a2 2 0 0 1 2 2v5" /></Ico></WindowButton>
          <WindowButton><Ico s={12} c="#fff"><path d="M1 1l10 10M11 1L1 11" /></Ico></WindowButton>
        </UserArea>
      </TitleBar>

      <Ribbon>
        <TabRow>
          <RibbonTab $mr={36}>File</RibbonTab>
          <RibbonTab $mr={31} $on>Home</RibbonTab>
          <RibbonTab $mr={31}>Insert</RibbonTab>
          <RibbonTab $mr={31}>Modeling</RibbonTab>
          <RibbonTab $mr={31}>View</RibbonTab>
          <RibbonTab $mr={31}>Optimize</RibbonTab>
          <RibbonTab $mr={31}>Help</RibbonTab>
          <ShareButton>
            <Ico s={16} c="#fff"><path d="M12 9.500V14.500H1.500V5H6" /><path d="M5 11c0-3 2-5 6-5V3l4 4-4 4V8.500c-3 0-5 1-6 2.500z" /></Ico>
            Share
            <svg width="10" height="6" viewBox="0 0 10 6" fill="none" stroke="#fff"><path d="M1 1l4 4 4-4" /></svg>
          </ShareButton>
        </TabRow>
        <GroupRow>
          <Group $w={161}>
            <GroupItems>
              <RibbonItem w={55} icon={R.paste} lines={['Paste']} dim />
              <SmallCol>
                <SmallRow><SmallIconBox>{R.cut}</SmallIconBox>Cut</SmallRow>
                <SmallRow><SmallIconBox>{R.copy}</SmallIconBox>Copy</SmallRow>
                <SmallRow><SmallIconBox>{R.painter}</SmallIconBox>Format painter</SmallRow>
              </SmallCol>
            </GroupItems>
            <GroupLabel>Clipboard</GroupLabel>
          </Group>
          <Group $w={361}>
            <GroupItems>
              <RibbonItem w={57} icon={R.get} lines={['Get', 'data']} chev />
              <RibbonItem w={41} icon={R.excel} lines={['Excel', 'workbook']} />
              <RibbonItem w={68} icon={R.onelake} lines={['OneLake', 'catalog']} chev />
              <RibbonItem w={28} icon={R.sql} lines={['SQL', 'Server']} />
              <RibbonItem w={53} icon={R.enter} lines={['Enter', 'data']} />
              <RibbonItem w={43} icon={R.dataverse} lines={['Dataverse']} />
              <RibbonItem w={70} icon={R.recent} lines={['Recent', 'sources']} chev />
            </GroupItems>
            <GroupLabel>Data</GroupLabel>
          </Group>
          <Group $w={117}>
            <GroupItems>
              <RibbonItem w={74} icon={R.transform} lines={['Transform', 'data']} chev />
              <RibbonItem w={24} icon={R.refresh} lines={['Refresh']} />
            </GroupItems>
            <GroupLabel>Queries</GroupLabel>
          </Group>
          <Group $w={148}>
            <GroupItems>
              <RibbonItem w={57} icon={R.newvis} lines={['New', 'visual']} />
              <RibbonItem w={22} icon={R.textbox} lines={['Text', 'box']} />
              <RibbonItem w={69} icon={R.more} lines={['More', 'visuals']} chev />
            </GroupItems>
            <GroupLabel>Insert</GroupLabel>
          </Group>
          <Group $w={188}>
            <GroupItems>
              <RibbonItem w={88} icon={R.nvc} lines={['New visual', 'calculation']} chev dim />
              <RibbonItem w={35} icon={R.measure} lines={['New', 'measure']} />
              <RibbonItem w={64.6} icon={R.quick} lines={['Quick', 'measure']} />
            </GroupItems>
            <GroupLabel>Calculations</GroupLabel>
          </Group>
          <Group $w={73.5}>
            <GroupItems>
              <RibbonItem w={72} icon={R.sens} lines={['Sensitivity', '']} chev dim />
            </GroupItems>
            <GroupLabel>Sensitivity</GroupLabel>
          </Group>
          <Group $w={59}>
            <GroupItems>
              <RibbonItem w={59} icon={R.publish} lines={['Publish']} />
            </GroupItems>
            <GroupLabel>Share</GroupLabel>
          </Group>
          <Group $w={132}>
            <GroupItems>
              <RibbonItem w={90} icon={R.prep} lines={['Prep data for', 'AI']} />
              <RibbonItem w={26} icon={R.copilot} lines={['Copilot']} />
            </GroupItems>
            <GroupLabel>Copilot</GroupLabel>
          </Group>
        </GroupRow>
        <CollapseMark><svg width="10" height="6" viewBox="0 0 10 6" fill="none" stroke="#323130" strokeWidth="1.5"><path d="M1 5l4-4 4 4" /></svg></CollapseMark>
      </Ribbon>

      <Body>
        <Rail>
          <RailMark />
          <RailIcon><Ico s={16} c="#000"><path d="M1 1v13h14" /><rect x="3.5" y="5.5" width="2.5" height="6.5" /><rect x="7.5" y="7.5" width="2.5" height="4.5" /><rect x="11.5" y="3.5" width="2.5" height="8.5" /></Ico></RailIcon>
          <RailIcon><Ico s={16} c="#8a8886"><rect x=".5" y="1.5" width="15" height="13" /><path d="M1 5h14M1 9h14M5.500 2v12M10.500 2v12" /></Ico></RailIcon>
          <RailIcon><Ico s={18} c="#8a8886"><rect x=".5" y="5.5" width="7" height="6" /><rect x="10.5" y="1.5" width="7" height="6" /><rect x="10.5" y="10.5" width="7" height="6" /><path d="M1 8.500h6M11 4.500h6M11 13.500h6M8 7l2-3M8 10l2 3" /></Ico></RailIcon>
          <RailIcon><svg width="18" height="18" viewBox="0 0 18 18" fill="none" stroke="#8a8886"><path d="M4 11V1h6l4 4v9" /><path d="M10 1v4h4" /><text x="8.5" y="17" textAnchor="middle" fontSize="6" fontWeight="700" fill="#8a8886" stroke="none" fontFamily="Open Sans">DAX</text></svg></RailIcon>
        </Rail>
        <Middle>
          <MiddleTop>
            <Canvas>
              <ReportPage>
                <VisualBox>
                  <Chart />
                  <VisualTools>
                    <Funnel s={18} />
                    <Ico s={16} c="#605e5c"><path d="M6 1.500H1.500v13h13V9M1.500 8.500H8v6M9 1.500h5.500V7M14 2L8.500 7.500" /></Ico>
                    <Ico s={16} c="#605e5c"><path d="M1 8h2.500M7 8h2.500M12.500 8h2.500" strokeWidth="2" /></Ico>
                  </VisualTools>
                </VisualBox>
              </ReportPage>
              <ScrollV />
              <ScrollH />
            </Canvas>
            <FilterPane>
              <DoubleChev left />
              <FilterGap />
              <Funnel s={14} rot c={INK} />
              <FilterWord>Filters</FilterWord>
            </FilterPane>
          </MiddleTop>
          <PageStrip>
            <StripTools>
              <StripTool $w={44}><Ico s={20} c="#605e5c"><rect x="1.5" y="2.5" width="17" height="11" /><path d="M2 12h16" /><path d="M10 14v3M6.500 17h7" /></Ico></StripTool>
              <StripTool $w={42}><Ico s={24} c="#605e5c"><rect x="6.5" y="1.5" width="11" height="22" rx="1" /><path d="M11 20h2" /></Ico></StripTool>
              <StripTool $w={22}><svg width="6" height="9" viewBox="0 0 6 9"><path d="M5 0v9L0 4.500z" fill="#c8c6c4" /></svg></StripTool>
              <StripTool $w={18}><svg width="6" height="9" viewBox="0 0 6 9"><path d="M1 0v9l5-4.500z" fill="#252423" /></svg></StripTool>
              <DeskMark />
            </StripTools>
            {PAGES.map((w, i) => (
              <PageTab key={i} $w={w} $on={i === 2}>
                Page {i + 1}
                {i === 2 ? <TabClose>x</TabClose> : null}
              </PageTab>
            ))}
            <AddPage><svg width="12" height="12" viewBox="0 0 12 12" stroke="#fff" strokeWidth="2.5"><path d="M6 0v12M0 6h12" /></svg></AddPage>
          </PageStrip>
        </Middle>
        <VizPane>
          <PaneHead>Visualizations<DoubleChev /></PaneHead>
          <BuildLabel>Build visual</BuildLabel>
          <BuildTabs>
            <ActiveTile>{ValuesIcon}</ActiveTile>
            {FormatIcon}
          </BuildTabs>
          <TabLine />
          <Gallery>
            {G.map((g, i) => <Cell key={i}><Ico s={20}>{g}</Ico></Cell>)}
            <Cell><Dots><Dot /><Dot /><Dot /></Dots></Cell>
          </Gallery>
          <WellLine />
          <WellHead $mt={9}>Values</WellHead>
          <DropBox $mt={5} $h={28} $pl={10}>Add data fields here</DropBox>
          <WellHead $mt={11} $b>Drill through</WellHead>
          <ToggleRow $mt={8}>Cross-report<Toggle><Knob />Off</Toggle></ToggleRow>
          <ToggleRow $mt={11}>Keep all filters<Toggle $on>On<Knob $on /></Toggle></ToggleRow>
          <DropBox $mt={11} $h={26} $pl={8}>Add drill-through fields here</DropBox>
        </VizPane>
        <DataPane>
          <PaneHead>Data<DoubleChev /></PaneHead>
          <DataSearch><Ico s={16} c="#605e5c"><circle cx="6.5" cy="6.5" r="5" /><path d="M10 10l5 5" /></Ico>Search</DataSearch>
          <FieldList>
            {FIELDS.map(([icon, label, expand], i) => <Field key={i} icon={icon} label={label} expand={expand} />)}
          </FieldList>
          <DataScroll />
        </DataPane>
      </Body>

      <StatusBar>
        Page 3 of 13
        <ZoomArea>
          <ZoomText $s={14}>-</ZoomText>
          <ZoomTrack><ZoomThumb /></ZoomTrack>
          <ZoomText $s={15}>+</ZoomText>
          <ZoomText $ml={7}>100%</ZoomText>
          <FitBox><Ico s={16} c="#605e5c"><rect x=".5" y="1.5" width="15" height="13" /><path d="M3 6V4h3M13 6V4h-3M3 10v2h3M13 10v2h-3" /></Ico></FitBox>
        </ZoomArea>
      </StatusBar>
      <StripeBottom />
    </Page>
  );
}
